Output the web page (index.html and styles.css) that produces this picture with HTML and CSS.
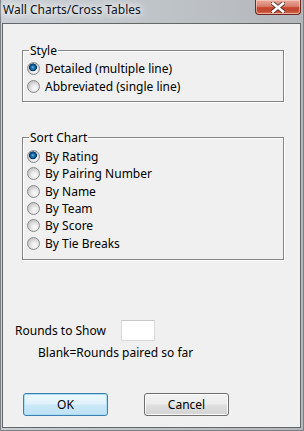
FILE: index.html
```html
<!DOCTYPE html>
<html>
<head>
<meta charset="utf-8">
<link rel="stylesheet" href="styles.css">
</head>
<body>
<div class="window">
  <div class="titlebar">
    <span class="title">Wall Charts/Cross Tables</span>
    <button class="close" aria-label="Close">
      <svg width="14" height="11" viewBox="0 0 14 11">
        <path d="M2 1.5 L12 9.5 M12 1.5 L2 9.5" stroke="#3b1f1c" stroke-width="4.4" stroke-linecap="square" fill="none" opacity="0.75"/>
        <path d="M2 1.5 L12 9.5 M12 1.5 L2 9.5" stroke="#ffffff" stroke-width="2.6" stroke-linecap="square" fill="none"/>
      </svg>
    </button>
  </div>
  <div class="client">
    <fieldset class="group group-style">
      <legend>Style</legend>
      <label class="opt"><input type="radio" name="style" checked><span>Detailed (multiple line)</span></label>
      <label class="opt"><input type="radio" name="style"><span>Abbreviated (single line)</span></label>
    </fieldset>
    <fieldset class="group group-sort">
      <legend>Sort Chart</legend>
      <label class="opt"><input type="radio" name="sort" checked><span>By Rating</span></label>
      <label class="opt"><input type="radio" name="sort"><span>By Pairing Number</span></label>
      <label class="opt"><input type="radio" name="sort"><span>By Name</span></label>
      <label class="opt"><input type="radio" name="sort"><span>By Team</span></label>
      <label class="opt"><input type="radio" name="sort"><span>By Score</span></label>
      <label class="opt"><input type="radio" name="sort"><span>By Tie Breaks</span></label>
    </fieldset>
    <div class="rounds">
      <span class="rounds-label">Rounds to Show</span>
      <input class="rounds-input" type="text">
    </div>
    <div class="hint">Blank=Rounds paired so far</div>
    <div class="buttons">
      <button class="btn btn-default">OK</button>
      <button class="btn">Cancel</button>
    </div>
  </div>
</div>
</body>
</html>
```

FILE: styles.css
```css
* { box-sizing: border-box; }
html, body { margin: 0; padding: 0; }
body {
  width: 304px;
  height: 431px;
  overflow: hidden;
  font-family: "Noto Sans", "Open Sans", sans-serif;
  font-size: 12px;
  color: #000;
  background: linear-gradient(to right, #c8ced4 0%, #bfc4c9 50%, #b3b7bb 100%);
}
.window {
  height: 431px;
  display: flex;
  flex-direction: column;
  border: 1px solid #7c8084;
  border-top: none;
}
.titlebar {
  height: 23px;
  display: flex;
  align-items: flex-start;
  flex: none;
}
.title {
  margin-left: 2px;
  line-height: 19px;
  font-size: 12px;
  color: #0c141c;
  text-shadow: 0 0 6px #fff, 0 0 10px #fff, 0 0 12px rgba(255,255,255,0.9);
}
.close {
  margin-left: auto;
  margin-right: 2px;
  width: 46px;
  height: 15px;
  padding: 0;
  border: 1px solid #6b2b22;
  border-top: none;
  border-radius: 0 0 4px 4px;
  background: linear-gradient(#e9a99b 0%, #d7806d 45%, #c5462f 55%, #c24a33 80%, #dc7a5c 100%);
  box-shadow: inset 0 0 0 1px rgba(255,220,210,0.55);
  display: flex;
  align-items: center;
  justify-content: center;
}
.close svg { display: block; }
.client {
  flex: 1;
  margin: 0 2px 2px 1px;
  border: 1px solid #646668;
  background: #f0f0f0;
  display: flex;
  flex-direction: column;
}
.group {
  margin: 0 16px 0 19px;
  padding: 0 4px;
  border: 1px solid #858585;
  box-shadow: inset 1px 1px 0 #fff, 1px 1px 0 #fff;
  min-width: 0;
}
.group legend {
  margin-left: 2px;
  padding: 0 1px;
  line-height: 15px;
}
.group-style { margin-top: 19px; padding-top: 1px; padding-bottom: 6px; }
.group-style .opt { height: 18px; }
.group-sort { margin-top: 28px; padding-top: 2.6px; padding-bottom: 7px; }
.group-sort .opt { height: 17.4px; }
.opt {
  display: flex;
  align-items: center;
}
.opt input {
  appearance: none;
  -webkit-appearance: none;
  margin: 0 5px 0 0;
  width: 13px;
  height: 13px;
  border-radius: 50%;
  border: 1px solid #8a8b8b;
  background: radial-gradient(circle at 62% 66%, #fbfbfb 0, #ececec 3px, #d6d6d6 5.5px, #c8c8c8 7px);
  flex: none;
}
.opt input:checked {
  background:
    radial-gradient(circle at 45% 40%, #6fb8e4 0, #1f74b0 1.6px, #0b4c86 3px, #083560 3.7px, rgba(8,53,96,0) 4.2px),
    radial-gradient(circle at 62% 66%, #fbfbfb 0, #ececec 3px, #d6d6d6 5.5px, #c8c8c8 7px);
}
.rounds {
  margin-top: 60px;
  height: 21px;
  display: flex;
  align-items: center;
  padding-left: 12px;
}
.rounds-label { width: 106px; }
.rounds-input {
  width: 34px;
  height: 21px;
  margin: 0;
  border: 1px solid #d9d9d9;
  border-top-color: #c8c8c8;
  background: #fff;
  font: inherit;
}
.hint {
  margin-top: 4px;
  padding-left: 35px;
  line-height: 16px;
}
.buttons {
  margin-top: 32px;
  padding-left: 20px;
  display: flex;
  gap: 36px;
}
.btn {
  width: 85px;
  height: 23px;
  padding: 0;
  border: 1px solid #707070;
  border-radius: 3px;
  background: linear-gradient(#f4f4f4 0%, #ececec 48%, #dfdfdf 52%, #d3d3d3 100%);
  box-shadow: inset 0 0 0 1px #fbfbfb;
  font-family: inherit;
  font-size: 12px;
  color: #000;
}
.btn-default {
  border-color: #3c7fb1;
  background: linear-gradient(#eef8fe 0%, #e0f2fc 48%, #cbe8f8 52%, #bfe2f5 100%);
  box-shadow: inset 0 0 0 1px #a9ddf6;
}
```
